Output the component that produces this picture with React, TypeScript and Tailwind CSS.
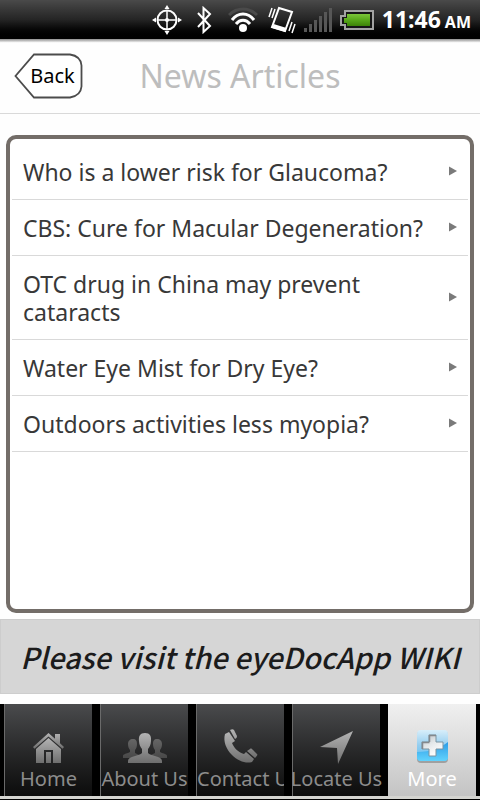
import type { ReactNode } from 'react';

interface Tab {
  label: string;
  icon: ReactNode;
  active?: boolean;
  clipped?: boolean;
}

const articles = [
  'Who is a lower risk for Glaucoma?',
  'CBS: Cure for Macular Degeneration?',
  'OTC drug in China may prevent cataracts',
  'Water Eye Mist for Dry Eye?',
  'Outdoors activities less myopia?',
];

// Shared gradients for the tab icons and the battery
function IconDefs() {
  return (
    <svg width="0" height="0" className="absolute" aria-hidden="true">
      <defs>
        <linearGradient id="metal" x1="0" y1="0" x2="0" y2="1">
          <stop offset="0" stopColor="#b4b4b4" />
          <stop offset="1" stopColor="#6e6e6e" />
        </linearGradient>
        <linearGradient id="metalDim" x1="0" y1="0" x2="0" y2="1">
          <stop offset="0" stopColor="#666666" />
          <stop offset="1" stopColor="#484848" />
        </linearGradient>
        <linearGradient id="sky" x1="0" y1="0" x2="0" y2="1">
          <stop offset="0" stopColor="#d8eefa" />
          <stop offset="0.5" stopColor="#93cdef" />
          <stop offset="1" stopColor="#5cc0f5" />
        </linearGradient>
        <linearGradient id="pool" x1="0" y1="0" x2="0" y2="1">
          <stop offset="0" stopColor="#2c9be6" />
          <stop offset="1" stopColor="#62d3fd" />
        </linearGradient>
        <linearGradient id="cross" x1="0" y1="0" x2="0.6" y2="1">
          <stop offset="0" stopColor="#b9bfc4" />
          <stop offset="0.5" stopColor="#e4e8ea" />
          <stop offset="1" stopColor="#ffffff" />
        </linearGradient>
        <linearGradient id="charge" x1="0" y1="0" x2="0" y2="1">
          <stop offset="0" stopColor="#7cc63a" />
          <stop offset="0.5" stopColor="#58a81a" />
          <stop offset="1" stopColor="#3c8207" />
        </linearGradient>
      </defs>
    </svg>
  );
}

function HomeIcon() {
  return (
    <svg width="32" height="32" viewBox="0 0 32 32" fill="url(#metal)">
      <path d="M15.500 1L0 15l1.500 1.800L15.500 4.500 29.500 16.800 31 15l-4-3.700V2h-5v4.800z" />
      <path
        fillRule="evenodd"
        d="M15.500 6L3 17v14h25V17zM11 18h9v13h-2V20h-5v11h-2z"
      />
    </svg>
  );
}

function PeopleIcon() {
  return (
    <svg width="46" height="32" viewBox="0 0 46 32">
      <g fill="url(#metalDim)">
        <path d="M11 7c3 0 4 2 4 5s-1 5-2 6v3l4 2v3H1v-2c0-2 3-2 7-4v-2c-1-1-2-3-2-6s2-5 5-5z" />
        <path d="M35 7c-3 0-4 2-4 5s1 5 2 6v3l-4 2v3h16v-2c0-2-3-2-7-4v-2c1-1 2-3 2-6s-2-5-5-5z" />
      </g>
      <path
        fill="url(#metal)"
        d="M23 1c5 0 6.500 3 6 8-.2 4-1.500 6-3 8v4c2 3 14 3 14 8v2H6v-2c0-5 12-5 14-8v-4c-1.500-2-2.800-4-3-8-.5-5 1-8 6-8z"
      />
    </svg>
  );
}

function PhoneIcon() {
  return (
    <svg width="36" height="36" viewBox="0 0 36 36" fill="url(#metal)">
      <path d="M2 6L6 4l6 9-3 2c2 5 6 9 12 11l2-2 8 7-2 3c-6 2-14-1-20-7C3 21 0 13 2 6z" />
      <path d="M7 2c2-1 3-1 4 0l3 6c0 2-1 2-2 3zM24 23l3-2c1-1 2 0 3 1l4 4c1 1 0 2-2 4z" />
    </svg>
  );
}

function ArrowIcon() {
  return (
    <svg width="34" height="34" viewBox="0 0 34 34" fill="url(#metal)">
      <path d="M33 1L18 34 17 18 0 17z" />
    </svg>
  );
}

function MoreIcon() {
  return (
    <svg width="36" height="36" viewBox="0 0 36 36">
      <rect x="3" y="3" width="31" height="32" rx="4" fill="#8a8a8a" opacity="0.7" />
      <rect x="3" y="2" width="31" height="31" rx="4" fill="url(#sky)" />
      <path d="M3 24c14 0 23-4 31-10v15a4 4 0 0 1-4 4H7a4 4 0 0 1-4-4z" fill="url(#pool)" />
      <path
        d="M15 7h7v7h7v7h-7v7h-7v-7H8v-7h7z"
        fill="url(#cross)"
        stroke="#7b93a1"
        strokeWidth="1"
      />
      <path d="M15.500 14V7.500H22M8.500 21v-6.500h7" fill="none" stroke="#84898d" strokeWidth="1.500" />
    </svg>
  );
}

const tabs: Tab[] = [
  { label: 'Home', icon: <HomeIcon /> },
  { label: 'About Us', icon: <PeopleIcon /> },
  { label: 'Contact Us', icon: <PhoneIcon />, clipped: true },
  { label: 'Locate Us', icon: <ArrowIcon /> },
  { label: 'More', icon: <MoreIcon />, active: true },
];

function StatusBar() {
  return (
    <div className="flex h-[39px] items-center justify-end bg-linear-to-b from-[#4a4a4a] via-[#252525] to-black pr-[9px] text-white">
      {/* GPS */}
      <svg width="30" height="30" viewBox="0 0 30 30" className="mr-[14px]" fill="none" stroke="#fff">
        <circle cx="15" cy="15" r="9.500" strokeWidth="2" />
        <path d="M15 5v20M5 15h20" strokeWidth="1.500" />
        <circle cx="15" cy="15" r="2" fill="#fff" stroke="none" />
        <path
          d="M15 0l2.500 4h-5zM15 30l2.500-4h-5zM0 15l4-2.500v5zM30 15l-4-2.500v5z"
          fill="#fff"
          stroke="none"
        />
      </svg>
      {/* Bluetooth */}
      <svg width="16" height="28" viewBox="0 0 16 28" className="mr-4" fill="none" stroke="#fff" strokeWidth="2">
        <path d="M2 7l12 13-6.500 6V2L14 8 2 21" />
      </svg>
      {/* Wifi */}
      <svg width="30" height="26" viewBox="0 0 30 26" className="mr-[10px]" fill="none" stroke="#fff">
        <path d="M1 8c8-8 20-8 28 0" stroke="#4a4a4a" strokeWidth="3" />
        <path d="M4 13c6-8 16-8 22 0" strokeWidth="3" />
        <path d="M8 17c4-5 10-5 14 0" strokeWidth="3" />
        <circle cx="15" cy="21" r="4" fill="#fff" stroke="none" />
      </svg>
      {/* Vibrate */}
      <svg width="28" height="28" viewBox="0 0 28 28" className="mr-2" fill="none" stroke="#fff">
        <path d="M11 2l13 4-7 19-13-4z" strokeWidth="2" />
        <path d="M5 20l13 4" strokeWidth="4" />
        <path d="M7 3L4 12M4 2L1 11M24 16l-3 9M27 18l-3 9" strokeWidth="1.500" />
      </svg>
      {/* Signal */}
      <svg width="28" height="24" viewBox="0 0 28 24" className="mr-2" fill="#575757">
        <path d="M0 20h3v4H0zM5 16h3v8H5zM10 12h3v12h-3zM15 8h3v16h-3zM20 4h3v20h-3zM25 0h3v24h-3z" />
      </svg>
      {/* Battery */}
      <svg width="34" height="20" viewBox="0 0 34 20" className="mr-2">
        <path d="M5 1h28v18H5v-4H1V6h4z" fill="#161616" stroke="#a3a3a3" strokeWidth="2" />
        <path d="M7 4h23v12H7v-3H4V8h3z" fill="url(#charge)" />
      </svg>
      <span className="text-[23px] font-bold">11:46</span>
      <span className="ml-1 pt-1 text-[16px] font-bold">AM</span>
    </div>
  );
}

export default function App() {
  return (
    <div className="flex min-h-screen flex-col bg-[#fefefe] font-['Noto_Sans','Open_Sans',sans-serif]">
      <IconDefs />
      <StatusBar />

      <header className="grid h-[75px] grid-cols-[1fr_auto_1fr] items-center border-b border-[#d9d9d9] bg-linear-to-b from-[#8c8c8c] via-[#fefefe] via-5% to-[#fefefe] px-[14px]">
        <button type="button" className="grid w-[69px] items-center">
          <svg width="69" height="46" viewBox="0 0 69 46" className="col-start-1 row-start-1">
            <path
              d="M20 1.500h36c7 1 11 5 11.500 11v21c-.5 6-5 10-11.500 11H20L1.500 23z"
              fill="#fff"
              stroke="#4c4c4c"
              strokeWidth="1.800"
            />
          </svg>
          <span className="col-start-1 row-start-1 pl-2 text-[20px] leading-6 text-black">Back</span>
        </button>
        <h1 className="text-[32px] leading-10 text-[#bdbdbd]">News Articles</h1>
      </header>

      <main className="flex flex-1 flex-col pt-[21px]">
        <section className="mx-[6px] flex-1 rounded-[10px] border-4 border-[#736d68] bg-white px-[2px] pt-[5px]">
          <ul>
            {articles.map((title) => (
              <li key={title} className="border-b border-[#d9d9d9]">
                <a href="#" className="flex items-center px-[11px] pt-[14px] pb-[13px]">
                  <span className="flex-1 pr-6 text-[23px] leading-7 text-[#383838]">{title}</span>
                  <svg width="8" height="10" viewBox="0 0 8 10" className="mb-[2px] shrink-0" fill="#7a7a7a">
                    <path d="M0 0.500L8 5 0 9.500z" />
                  </svg>
                </a>
              </li>
            ))}
          </ul>
        </section>

        <a
          href="#"
          className="mt-[6px] mb-[10px] flex h-[75px] items-center justify-center border border-[#cdcdcd] bg-[#d6d6d6] font-['Noto_Sans_CJK_SC',sans-serif] text-[29px] font-medium whitespace-nowrap text-[#1c1c1c] italic"
        >
          Please visit the eyeDocApp WIKI
        </a>
      </main>

      <nav className="border-b border-black bg-black">
        <div className="grid grid-cols-5 border-b-3 border-[#d4d4d0]">
          {tabs.map((tab) => (
            <button
              key={tab.label}
              type="button"
              className={
                tab.active
                  ? 'mx-1 flex h-[92px] min-w-0 flex-col items-center justify-end bg-linear-to-b from-[#f0f0f0] to-[#c4c4c4] pb-[3px] text-white'
                  : 'mx-1 flex h-[92px] min-w-0 flex-col items-center justify-end border-l border-[#6a6a6a] bg-linear-to-b from-[#4a4b4d] to-[#0c0c0c] pb-[3px] text-[#8c8c8c]'
              }
            >
              <span className="flex items-end justify-center pb-px">{tab.icon}</span>
              <span
                className={
                  tab.clipped
                    ? 'w-full overflow-hidden text-[20px] leading-7 whitespace-nowrap'
                    : 'text-[20px] leading-7 whitespace-nowrap'
                }
              >
                {tab.label}
              </span>
            </button>
          ))}
        </div>
      </nav>
    </div>
  );
}
